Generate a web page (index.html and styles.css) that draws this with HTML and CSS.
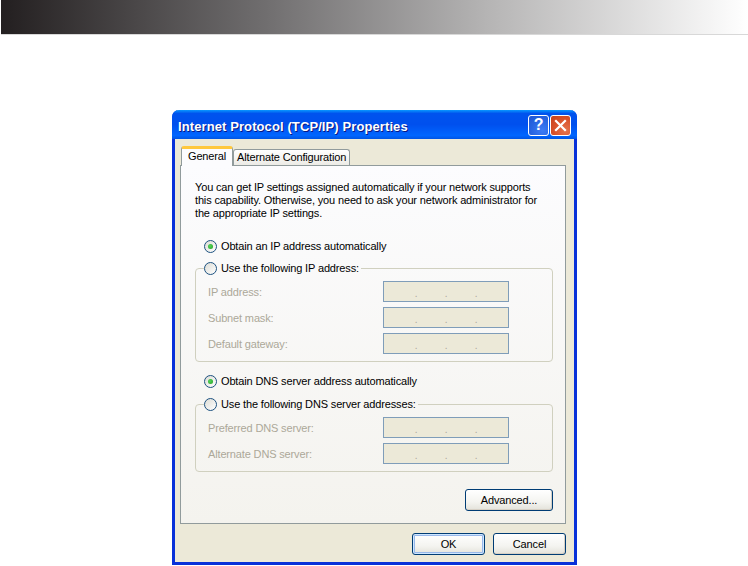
FILE: index.html
```html
<!DOCTYPE html>
<html lang="en">
  <head>
    <meta charset="UTF-8" />
    <meta name="viewport" content="width=device-width, initial-scale=1.0" />
    <title>Internet Protocol (TCP/IP) Properties</title>

    <link rel="stylesheet" href="styles.css">
  </head>
  <body>
    <div class="header-bar"></div>

    <div class="stage">
      <div class="window">
        <div class="titlebar">
          <span class="titlebar-text">Internet Protocol (TCP/IP) Properties</span>
          <div class="titlebar-buttons">
            <span class="tb-btn tb-help">?</span>
            <span class="tb-btn tb-close">
              <svg width="13" height="13" viewBox="0 0 13 13">
                <path d="M2 2 L11 11 M11 2 L2 11" stroke="#fff" stroke-width="2.2" stroke-linecap="square" />
              </svg>
            </span>
          </div>
        </div>

        <div class="window-body">
          <div class="tabs">
            <span class="tab is-active">General</span>
            <span class="tab">Alternate Configuration</span>
          </div>

          <div class="panel">
            <p class="intro">
              You can get IP settings assigned automatically if your network supports<br />
              this capability. Otherwise, you need to ask your network administrator for<br />
              the appropriate IP settings.
            </p>

            <label class="radio-row first">
              <span class="radio is-checked"></span>
              Obtain an IP address automatically
            </label>

            <fieldset class="group">
              <legend>
                <span class="radio-row">
                  <span class="radio"></span>
                  Use the following IP address:
                </span>
              </legend>
              <div class="field-row">
                <span class="field-label">IP address:</span>
                <span class="ip-field"><span>.</span><span>.</span><span>.</span></span>
              </div>
              <div class="field-row">
                <span class="field-label">Subnet mask:</span>
                <span class="ip-field"><span>.</span><span>.</span><span>.</span></span>
              </div>
              <div class="field-row">
                <span class="field-label">Default gateway:</span>
                <span class="ip-field"><span>.</span><span>.</span><span>.</span></span>
              </div>
            </fieldset>

            <label class="radio-row second">
              <span class="radio is-checked"></span>
              Obtain DNS server address automatically
            </label>

            <fieldset class="group">
              <legend>
                <span class="radio-row">
                  <span class="radio"></span>
                  Use the following DNS server addresses:
                </span>
              </legend>
              <div class="field-row">
                <span class="field-label">Preferred DNS server:</span>
                <span class="ip-field"><span>.</span><span>.</span><span>.</span></span>
              </div>
              <div class="field-row">
                <span class="field-label">Alternate DNS server:</span>
                <span class="ip-field"><span>.</span><span>.</span><span>.</span></span>
              </div>
            </fieldset>

            <div class="advanced-row">
              <button class="xp-btn advanced">Advanced...</button>
            </div>
          </div>

          <div class="dialog-buttons">
            <button class="xp-btn is-default">OK</button>
            <button class="xp-btn">Cancel</button>
          </div>
        </div>
      </div>
    </div>
  </body>
</html>
```

FILE: styles.css
```css
html {
  box-sizing: border-box;
  font-family: "Liberation Sans", Arial, sans-serif;
  font-size: 11px;
  letter-spacing: -0.15px;
}

*,
*:before,
*:after {
  box-sizing: inherit;
}

body {
  margin: 0;
  padding: 0;
  background: #fff;
  overflow: hidden;
}

/* barra degradada de arriba */
.header-bar {
  height: 35px;
  margin-left: 1px;
  background: linear-gradient(to right, #231f20 0%, #6f6d6e 35%, #b5b4b4 65%, #ffffff 100%);
  border-bottom: 1px solid #d8d8d8;
}

.stage {
  padding: 75px 0 0 172px;
}

/* ********** Ventana XP ********** */
.window {
  width: 405px;
  height: 455px;
  background: #ece9d8;
  border: 3px solid #0831d9;
  border-top: 0;
  border-radius: 7px 7px 0 0;
  display: flex;
  flex-direction: column;
}

.titlebar {
  height: 29px;
  margin: 0 -3px;
  padding: 3px 6px 0 6px;
  border-radius: 7px 7px 0 0;
  background: linear-gradient(to bottom, #0997ff 0%, #0053ee 12%, #0050ee 50%, #0066ff 88%, #0054e3 100%);
  display: flex;
  align-items: center;
  justify-content: space-between;
}

.titlebar-text {
  color: #fff;
  font-weight: bold;
  font-size: 13px;
  letter-spacing: 0.1px;
  text-shadow: 1px 1px 0 #0a1883;
}

.titlebar-buttons {
  display: flex;
  gap: 1px;
  margin-top: -2px;
}

.tb-btn {
  width: 21px;
  height: 21px;
  border: 1px solid #fff;
  border-radius: 3px;
  display: flex;
  align-items: center;
  justify-content: center;
  color: #fff;
  font-size: 16px;
  font-weight: bold;
}

.tb-help {
  background: radial-gradient(circle at 70% 75%, #3d7cf5 0%, #2663e0 60%, #1f55d0 100%);
}

.tb-close {
  background: radial-gradient(circle at 75% 75%, #e5754e 0%, #d9512a 55%, #c4401b 100%);
}

.window-body {
  flex: 1;
  padding: 7px 8px 0 5px;
  display: flex;
  flex-direction: column;
}

/* pestañas */
.tabs {
  display: flex;
  align-items: flex-end;
  height: 19px;
  padding-left: 1px;
}

.tab {
  height: 16px;
  padding: 0 3px;
  border: 1px solid #919b9c;
  border-bottom: 0;
  border-radius: 3px 3px 0 0;
  background: linear-gradient(to bottom, #ffffff, #ecebe6);
  line-height: 15px;
  color: #000;
}

.tab.is-active {
  height: 20px;
  padding: 0 6px;
  margin-bottom: -1px;
  background: #fcfcfe;
  border-top: 3px solid #ffc83c;
  line-height: 15px;
  position: relative;
  z-index: 1;
}

.panel {
  height: 359px;
  border: 1px solid #919b9c;
  background: linear-gradient(to bottom, #fcfcfe 0%, #f4f3ee 100%);
  padding: 15px 12px 0 14px;
}

.intro {
  margin: 0;
  line-height: 13px;
  color: #000;
}

.radio-row {
  display: flex;
  align-items: center;
  gap: 4px;
  height: 16px;
  color: #000;
}

.radio-row.first {
  margin: 18px 0 6px 9px;
}

.radio-row.second {
  margin: 11px 0 7px 9px;
}

.radio {
  width: 13px;
  height: 13px;
  border: 1px solid #1c5180;
  border-radius: 50%;
  background: linear-gradient(135deg, #dcdcd5, #ffffff);
  display: inline-flex;
  align-items: center;
  justify-content: center;
}

.radio.is-checked:after {
  content: "";
  width: 5px;
  height: 5px;
  border-radius: 50%;
  background: radial-gradient(circle at 40% 40%, #55d35b, #21a121);
}

.group {
  margin: 0;
  padding: 0 0 7px 12px;
  border: 1px solid #d0d0bf;
  border-radius: 4px;
  width: 358px;
}

.group legend {
  padding: 0 2px 0 0;
  margin-left: -4px;
}

.field-row {
  display: flex;
  align-items: center;
  height: 21px;
  margin-top: 5px;
}

.field-label {
  width: 175px;
  color: #aca899;
}

.ip-field {
  width: 126px;
  height: 21px;
  border: 1px solid #7f9db9;
  background: #ece9d8;
  display: flex;
  justify-content: center;
  align-items: flex-end;
  color: #aca899;
  line-height: 15px;
  font-size: 10px;
}

.ip-field span {
  width: 30px;
  text-align: center;
}

/* botones */
.xp-btn {
  font-family: "Liberation Sans", Arial, sans-serif;
  font-size: 11px;
  letter-spacing: -0.15px;
  color: #000;
  height: 22px;
  border: 1px solid #003c74;
  border-radius: 3px;
  background: linear-gradient(to bottom, #ffffff 0%, #f4f4f0 60%, #e3e2da 100%);
  box-shadow: inset -1px -1px 0 #d6d0c5;
  padding: 0;
}

.advanced-row {
  display: flex;
  justify-content: flex-end;
  margin-top: 17px;
}

.advanced {
  width: 88px;
}

.dialog-buttons {
  display: flex;
  justify-content: flex-end;
  gap: 8px;
  margin-top: 9px;
}

.dialog-buttons .xp-btn {
  width: 73px;
}

.xp-btn.is-default {
  box-shadow: inset 0 0 0 1px #cee7ff, inset 0 0 0 2px #98b8ea;
}
```
